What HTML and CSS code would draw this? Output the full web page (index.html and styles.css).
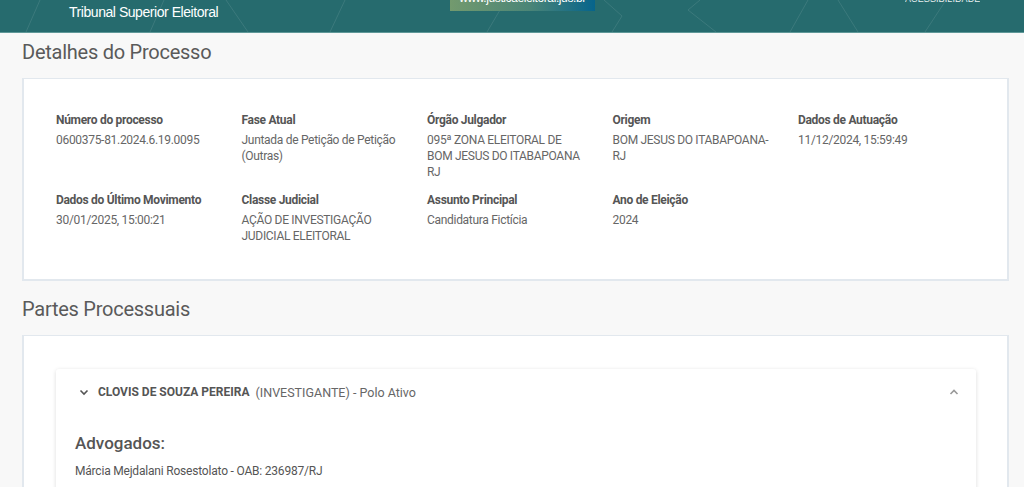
FILE: index.html
```html
<!DOCTYPE html>
<html lang="pt-BR">
<head>
<meta charset="utf-8">
<title>Detalhes do Processo</title>
<link rel="stylesheet" href="styles.css">
</head>
<body>
<header class="topbar">
  <svg class="pattern" width="1024" height="32" viewBox="0 0 1024 32" aria-hidden="true">
    <g fill="none" stroke="rgba(255,255,255,0.10)" stroke-width="1">
      <path d="M26 32 L40 0"/>
      <path d="M150 32 L164 0"/>
      <path d="M226 0 L248 32"/>
      <path d="M330 32 L345 0"/>
      <path d="M487 32 L500 10"/>
      <path d="M604 0 L622 16 L612 32"/>
      <path d="M700 0 L688 10 L716 32"/>
      <path d="M790 32 L808 0"/>
      <path d="M838 0 L858 32"/>
      <path d="M925 32 L946 0"/>
    </g>
  </svg>
  <div class="brand">Tribunal Superior Eleitoral</div>
  <div class="portal"><span>www.justicaeleitoral.jus.br</span></div>
  <div class="acess"><span>ACESSIBILIDADE</span></div>
</header>

<main class="content">
  <h2 class="section-title">Detalhes do Processo</h2>
  <section class="card details">
    <div class="grid">
      <div class="field"><div class="label">Número do processo</div><div class="value">0600375-81.2024.6.19.0095</div></div>
      <div class="field"><div class="label">Fase Atual</div><div class="value">Juntada de Petição de Petição (Outras)</div></div>
      <div class="field"><div class="label">Órgão Julgador</div><div class="value">095ª ZONA ELEITORAL DE BOM JESUS DO ITABAPOANA RJ</div></div>
      <div class="field"><div class="label">Origem</div><div class="value">BOM JESUS DO ITABAPOANA-RJ</div></div>
      <div class="field"><div class="label">Dados de Autuação</div><div class="value">11/12/2024, 15:59:49</div></div>
      <div class="field"><div class="label">Dados do Último Movimento</div><div class="value">30/01/2025, 15:00:21</div></div>
      <div class="field"><div class="label">Classe Judicial</div><div class="value">AÇÃO DE INVESTIGAÇÃO JUDICIAL ELEITORAL</div></div>
      <div class="field"><div class="label">Assunto Principal</div><div class="value">Candidatura Fictícia</div></div>
      <div class="field"><div class="label">Ano de Eleição</div><div class="value">2024</div></div>
    </div>
  </section>

  <h2 class="section-title second">Partes Processuais</h2>
  <section class="card partes">
    <div class="party">
      <div class="party-head">
        <svg class="chev" width="12" height="12" viewBox="0 0 12 12" aria-hidden="true"><path d="M2.5 4.5 L6 8 L9.5 4.5" fill="none" stroke="#555" stroke-width="1.6"/></svg>
        <span class="pname">CLOVIS DE SOUZA PEREIRA</span>
        <span class="prole">(INVESTIGANTE) - Polo Ativo</span>
        <svg class="chev-up" width="12" height="12" viewBox="0 0 12 12" aria-hidden="true"><path d="M2.5 8 L6 4.5 L9.5 8" fill="none" stroke="#999" stroke-width="1.6"/></svg>
      </div>
      <div class="party-body">
        <h3 class="adv-title">Advogados:</h3>
        <div class="adv">Márcia Mejdalani Rosestolato - OAB: 236987/RJ</div>
      </div>
    </div>
  </section>
</main>
</body>
</html>
```

FILE: styles.css
```css
* { box-sizing: border-box; }
html, body { margin: 0; padding: 0; }
body {
  background: #f8f8f8;
  font-family: Roboto, "Liberation Sans", Arial, sans-serif;
  color: #555;
  overflow: hidden;
  height: 487px;
}

.topbar {
  position: relative;
  height: 33px;
  background: #266b6e;
  border-bottom: 1px solid #5f9898;
  overflow: hidden;
}
.pattern { position: absolute; left: 0; top: 0; }
.brand {
  position: absolute;
  left: 69px;
  top: 4px;
  font-family: "Liberation Sans", Arial, sans-serif;
  font-size: 14px;
  letter-spacing: -0.45px;
  color: #fff;
}
.portal {
  position: absolute;
  left: 450px;
  top: 0;
  width: 145px;
  height: 11px;
  background: linear-gradient(90deg, #739a6e 0%, #4b8577 55%, #06648c 100%);
  overflow: hidden;
  text-align: center;
}
.portal span {
  display: block;
  margin-top: -9px;
  font-family: "Liberation Sans", Arial, sans-serif;
  font-size: 12px;
  letter-spacing: -0.4px;
  color: #fff;
  line-height: 14px;
}
.acess {
  position: absolute;
  left: 905px;
  top: 0;
  height: 4px;
  overflow: hidden;
}
.acess span {
  display: block;
  margin-top: -6px;
  font-family: "Liberation Sans", Arial, sans-serif;
  font-size: 9px;
  line-height: 10px;
  letter-spacing: 0.1px;
  color: #e8f0f0;
}

.content { padding: 0 15px 0 22px; }
.section-title {
  margin: 0;
  padding-top: 7px;
  height: 45px;
  font-size: 20px;
  font-weight: 400;
  line-height: 24px;
  letter-spacing: -0.25px;
  color: #5a5a5a;
}
.section-title.second { padding-top: 6px; height: 44px; margin-top: 10px; }

.card {
  width: 987px;
  background: #fff;
  border: 2px solid #e2e8ee;
  border-width: 1.5px 2px 2px 2px;
}
.details { height: 203px; padding: 33px 0 0 32px; }
.grid {
  display: grid;
  grid-template-columns: repeat(5, 185.5px);
  row-gap: 12px;
}
.field { padding-right: 26px; }
.label {
  font-size: 12px;
  font-weight: 700;
  line-height: 16px;
  letter-spacing: -0.3px;
  color: #555;
  margin-bottom: 4px;
  white-space: nowrap;
}
.value {
  font-size: 12px;
  line-height: 16px;
  letter-spacing: -0.3px;
  color: #666;
}

.partes { height: 200px; padding: 33px 31px 0 32px; }
.party {
  background: #fff;
  border-radius: 3px;
  box-shadow: 0 1px 4px rgba(0,0,0,0.14);
  height: 150px;
}
.party-head {
  display: flex;
  align-items: center;
  height: 46px;
  padding: 0 16px 0 22px;
}
.chev { margin-right: 8px; }
.pname { font-size: 12px; font-weight: 700; color: #555; }
.prole { font-size: 12.5px; color: #666; margin-left: 6px; }
.chev-up { margin-left: auto; }
.party-body { padding: 18px 19px 0 19px; }
.adv-title {
  margin: 0;
  font-size: 17px;
  font-weight: 500;
  line-height: 20px;
  color: #555;
}
.adv {
  margin-top: 11px;
  font-size: 12px;
  line-height: 14px;
  letter-spacing: -0.2px;
  color: #555;
}
```
